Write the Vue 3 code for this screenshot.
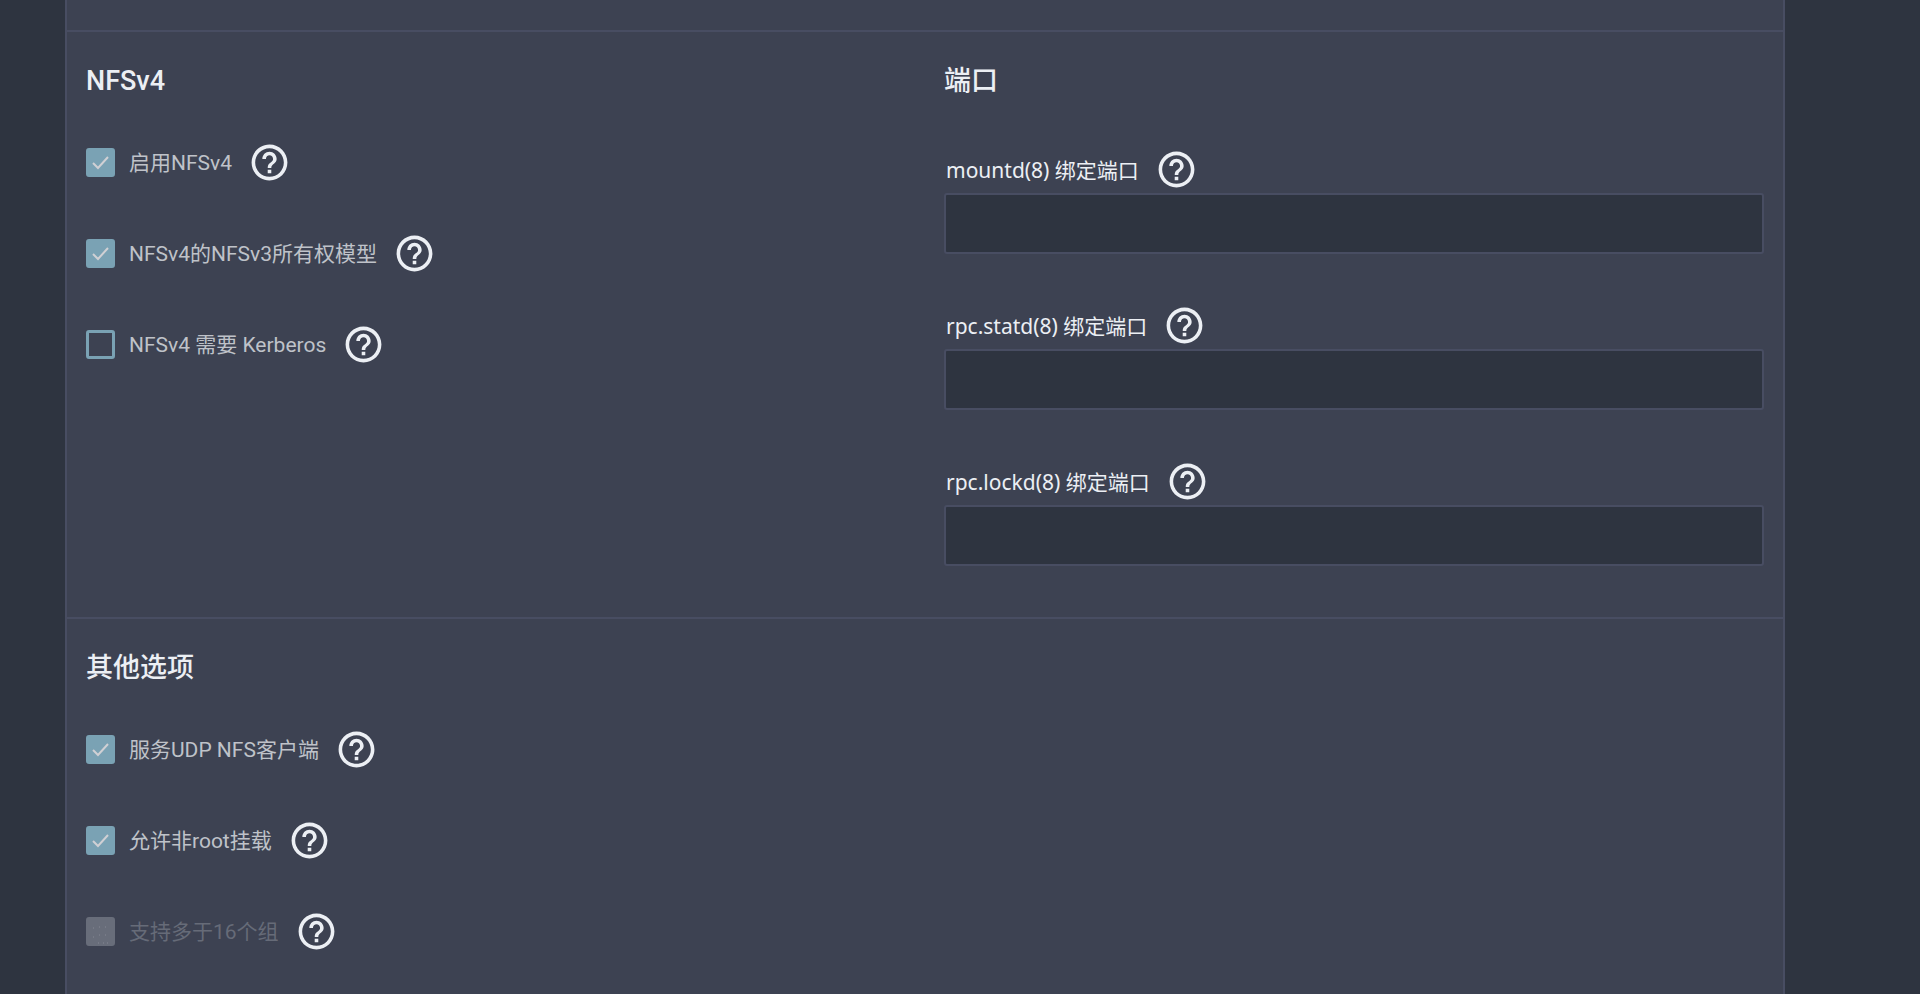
<template>
  <main class="page">
    <form class="card" @submit.prevent>
      <section class="section">
        <fieldset class="column">
          <legend class="title">NFSv4</legend>
          <div class="checks">
            <div v-for="item in nfsOptions" :key="item.id" class="check-row">
              <span class="box">
                <input :id="item.id" v-model="item.value" type="checkbox" :disabled="item.disabled" />
                <svg class="tick" viewBox="0 0 29 29" aria-hidden="true"><path d="M7 15l5 5L22 9" /></svg>
              </span>
              <label :for="item.id">{{ item.label }}</label>
              <button type="button" class="help" :aria-label="item.label">
                <svg viewBox="0 0 24 24" aria-hidden="true"><path :d="helpPath" /></svg>
              </button>
            </div>
          </div>
        </fieldset>

        <fieldset class="column">
          <legend class="title">端口</legend>
          <div class="ports">
            <div v-for="port in ports" :key="port.id" class="port">
              <div class="port-label">
                <label :for="port.id">{{ port.label }}</label>
                <button type="button" class="help" :aria-label="port.label">
                  <svg viewBox="0 0 24 24" aria-hidden="true"><path :d="helpPath" /></svg>
                </button>
              </div>
              <input :id="port.id" v-model="port.value" type="text" />
            </div>
          </div>
        </fieldset>
      </section>

      <section class="section">
        <fieldset class="column">
          <legend class="title">其他选项</legend>
          <div class="checks">
            <div v-for="item in otherOptions" :key="item.id" class="check-row">
              <span class="box">
                <input :id="item.id" v-model="item.value" type="checkbox" :disabled="item.disabled" />
                <svg v-if="item.disabled" class="dots" viewBox="0 0 29 29" aria-hidden="true">
                  <path d="M7 11h1M13 10h1M19 10h1M7 20h1M13 18h1M19 18h1M12 26h1M17 26h1M21 26h1" />
                </svg>
                <svg v-else class="tick" viewBox="0 0 29 29" aria-hidden="true"><path d="M7 15l5 5L22 9" /></svg>
              </span>
              <label :for="item.id">{{ item.label }}</label>
              <button type="button" class="help" :aria-label="item.label">
                <svg viewBox="0 0 24 24" aria-hidden="true"><path :d="helpPath" /></svg>
              </button>
            </div>
          </div>
        </fieldset>
      </section>
    </form>
  </main>
</template>

<script setup>
import { ref } from 'vue'

const helpPath = 'M11 18h2v-2h-2v2zm1-16C6.48 2 2 6.48 2 12s4.48 10 10 10 10-4.48 10-10S17.52 2 12 2zm0 18c-4.41 0-8-3.59-8-8s3.59-8 8-8 8 3.59 8 8-3.59 8-8 8zm0-14c-2.21 0-4 1.79-4 4h2c0-1.1.9-2 2-2s2 .9 2 2c0 2-3 1.75-3 5h2c0-2.25 3-2.5 3-5 0-2.21-1.79-4-4-4z'

const nfsOptions = ref([
  { id: 'v4', label: '启用NFSv4', value: true },
  { id: 'v4_v3owner', label: 'NFSv4的NFSv3所有权模型', value: true },
  { id: 'v4_krb', label: 'NFSv4 需要 Kerberos', value: false }
])

const ports = ref([
  { id: 'mountd_port', label: 'mountd(8) 绑定端口', value: '' },
  { id: 'rpcstatd_port', label: 'rpc.statd(8) 绑定端口', value: '' },
  { id: 'rpclockd_port', label: 'rpc.lockd(8) 绑定端口', value: '' }
])

const otherOptions = ref([
  { id: 'udp', label: '服务UDP NFS客户端', value: true },
  { id: 'allow_nonroot', label: '允许非root挂载', value: true },
  { id: 'userd_manage_gids', label: '支持多于16个组', value: false, disabled: true }
])
</script>

<style>
body {
  margin: 0;
  background: #2e3440;
}
</style>

<style scoped>
.page {
  box-sizing: border-box;
  min-height: 100vh;
  display: flex;
  padding: 0 135px 0 65px;
  color: #eceff4;
  font-family: Roboto, "Noto Sans CJK SC", sans-serif;
}

.card {
  flex: 1;
  min-width: 0;
  padding-top: 30px;
  background: #3d4252;
  border: solid #484d62;
  border-width: 0 2px;
}

.section {
  display: grid;
  grid-template-columns: 1fr 1fr;
  padding: 31px 0 51px;
  border-top: 2px solid #484d62;
}

.section:last-child {
  padding-bottom: 16px;
}

.column {
  min-width: 0;
  margin: 0;
  padding: 0 19px;
  border: 0;
}

.title {
  padding: 0;
  font-size: 27px;
  font-weight: 500;
  line-height: 36px;
}

.checks {
  display: flex;
  flex-direction: column;
  gap: 48px;
  padding-top: 42px;
}

.check-row {
  display: flex;
  align-items: center;
  height: 43px;
  font-size: 21px;
  line-height: 32px;
  color: #bfc2c9;
}

.box {
  display: grid;
  flex: none;
  width: 29px;
  height: 29px;
  margin-right: 14px;
}

.box input {
  grid-area: 1 / 1;
  appearance: none;
  width: 29px;
  height: 29px;
  margin: 0;
  border: 3px solid #7aa2b4;
  border-radius: 3px;
}

.box input:checked {
  background: #7aa2b4;
}

.box input:disabled {
  background: #686d7a;
  border-color: #686d7a;
}

.tick,
.dots {
  grid-area: 1 / 1;
  pointer-events: none;
  fill: none;
  stroke: #d0d0d4;
  stroke-width: 2;
}

.tick {
  visibility: hidden;
}

.dots {
  stroke: #858994;
  stroke-width: 1;
}

.box input:checked + .tick {
  visibility: visible;
}

.check-row:has(input:disabled) label {
  color: #666b78;
}

.help {
  flex: none;
  width: 43px;
  height: 43px;
  margin-left: 16px;
  padding: 0;
  border: 0;
  background: none;
  color: #eceff4;
  cursor: pointer;
}

.help svg {
  display: block;
  fill: currentColor;
}

.ports {
  display: flex;
  flex-direction: column;
  gap: 50px;
  padding-top: 49px;
}

.port-label {
  display: flex;
  align-items: center;
  height: 43px;
  padding-left: 2px;
  font-family: "Noto Sans", "Noto Sans CJK SC", sans-serif;
  font-size: 21px;
  line-height: 32px;
}

.port > input {
  box-sizing: border-box;
  display: block;
  width: 100%;
  height: 61px;
  margin-top: 2px;
  padding: 0 16px;
  background: #2e3440;
  border: 2px solid #484d62;
  border-radius: 3px;
  color: #eceff4;
  font: inherit;
  font-size: 21px;
}
</style>
